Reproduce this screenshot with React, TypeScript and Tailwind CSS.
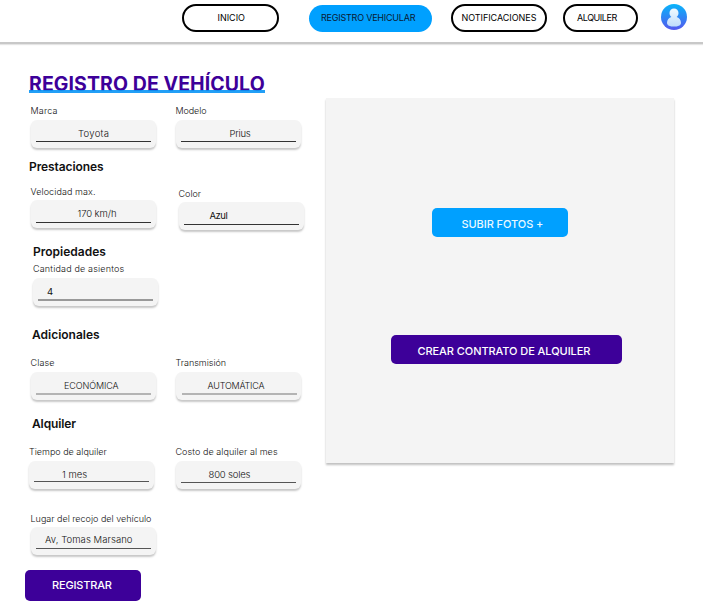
import type { ReactNode } from "react";

type FieldProps = {
  label: string;
  value: string;
  className?: string;
  labelClass?: string;
  boxClass?: string;
  valueClass?: string;
  lineClass?: string;
};

function Field({
  label,
  value,
  className = "",
  labelClass = "",
  boxClass = "mt-[3px] pt-2",
  valueClass = "",
  lineClass = "mt-px h-px bg-[#333]",
}: FieldProps) {
  return (
    <div className={`w-[125px] shrink-0 whitespace-nowrap ${className}`}>
      <div className={`text-[9px] leading-3 font-light text-[#111] ${labelClass}`}>{label}</div>
      <div className={`h-7 rounded-[6px] bg-[#f4f4f4] shadow-[0_2px_2px_rgba(0,0,0,0.22)] ${boxClass}`}>
        <div className={`text-[9.5px] leading-3 font-light text-[#111] ${valueClass}`}>{value}</div>
        <div className={`ml-[5px] w-[115px] ${lineClass}`} />
      </div>
    </div>
  );
}

function Heading({ children, className }: { children: ReactNode; className: string }) {
  return <h2 className={`text-[12px] leading-4 font-semibold text-[#111] ${className}`}>{children}</h2>;
}

function Avatar() {
  return (
    <svg viewBox="0 0 26 26" className="mt-[4px] ml-[23px] size-[26px]">
      <defs>
        <linearGradient id="disc" x1="0" y1="0" x2="0" y2="1">
          <stop offset="0" stopColor="#08b5fb" />
          <stop offset="1" stopColor="#5558ee" />
        </linearGradient>
        <linearGradient id="person" x1="0" y1="0" x2="0" y2="1">
          <stop offset="0" stopColor="#f0faff" />
          <stop offset="1" stopColor="#bfdcfb" />
        </linearGradient>
      </defs>
      <circle cx="13" cy="13" r="13" fill="url(#disc)" />
      <path
        d="M13 4.500c2.600 0 4.500 2 4.500 4.500 0 1.700-.7 3.100-1.900 4.100 2.400.7 4.400 2.800 4.400 5.600 0 2.600-3 3.900-7 3.900s-7-1.300-7-3.900c0-2.800 2-4.900 4.400-5.600C9.200 12.100 8.500 10.700 8.500 9c0-2.500 1.900-4.500 4.500-4.500z"
        fill="url(#person)"
      />
    </svg>
  );
}

export default function App() {
  return (
    <div className="h-[607px] w-[703px] overflow-hidden bg-white font-['Inter',sans-serif] text-black">
      <header className="flex h-[44px] items-start border-b-2 border-[#c8c8c8] pl-[182px] text-[9px] leading-3 whitespace-nowrap shadow-[0_1px_1px_rgba(0,0,0,0.1)]">
        <div className="mt-[4px] h-7 w-[97px] rounded-full border-2 border-black pt-[6px] pl-[33.500px]">INICIO</div>
        <div className="mt-[5px] ml-[30px] h-[27px] w-[123px] rounded-full bg-[#00a0ff] pt-[7px] pl-[12px] tracking-[-0.22px] text-[#0a1a33]">
          REGISTRO VEHICULAR
        </div>
        <div className="mt-[4px] ml-[19px] h-7 w-[96px] rounded-full border-2 border-black pt-[6px] pl-[8.500px] tracking-[-0.04px]">
          NOTIFICACIONES
        </div>
        <div className="mt-[4px] ml-[16px] h-7 w-[75px] rounded-full border-2 border-black pt-[6px] pl-[12px] tracking-[-0.45px]">
          ALQUILER
        </div>
        <Avatar />
      </header>

      <main className="flex">
        <section className="w-[326px] shrink-0 pt-[27px] pl-[25px]">
          <div className="relative ml-[4px] h-6 w-[236px] pt-px">
            <h1 className="text-[19.500px] leading-6 font-bold tracking-[0.080px] whitespace-nowrap text-[#3d0099]">
              REGISTRO DE VEHÍCULO
            </h1>
            <div className="absolute top-[19px] left-0 h-[2.500px] w-[236px] bg-[#0a95f5]/90" />
          </div>

          <div className="mt-[10px] flex">
            <Field label="Marca" value="Toyota" className="ml-[5.500px]" labelClass="tracking-[0.2px]" valueClass="pl-[47.500px] tracking-[0.28px]" />
            <Field label="Modelo" value="Prius" className="ml-5" labelClass="tracking-[-0.1px]" valueClass="pl-[54px] tracking-[-0.25px]" />
          </div>

          <Heading className="mt-[11px] ml-[4px] tracking-[-0.1px]">Prestaciones</Heading>
          <div className="mt-[11px] flex">
            <Field
              label="Velocidad max."
              value="170 km/h"
              className="ml-[5.500px]"
              labelClass="tracking-[0.09px]"
              boxClass="mt-[2px] pt-2"
              valueClass="pl-[47px] tracking-[-0.09px]"
              lineClass="mt-[2px] h-px bg-[#333]"
            />
            <Field
              label="Color"
              value="Azul"
              className="mt-[2px] ml-[23px]"
              boxClass="mt-[2px] pt-2"
              valueClass="pl-[31px] font-normal tracking-[-0.5px]"
              lineClass="mt-[2px] h-px bg-[#333]"
            />
          </div>

          <Heading className="mt-[14px] ml-[8px]">Propiedades</Heading>
          <Field
            label="Cantidad de asientos"
            value="4"
            className="mt-[3px] ml-[8px]"
            labelClass="tracking-[0.17px]"
            valueClass="pl-[14px] font-normal"
            lineClass="mt-px h-[2px] bg-[#999]"
          />

          <Heading className="mt-[21px] ml-[7px]">Adicionales</Heading>
          <div className="mt-[14px] flex">
            <Field
              label="Clase"
              value="ECONÓMICA"
              className="ml-[5.500px]"
              labelClass="tracking-[0.13px]"
              valueClass="pl-[33.500px] text-[9px] tracking-[-0.1px]"
              lineClass="h-[2px] bg-[#b4b4b4] mt-px"
            />
            <Field
              label="Transmisión"
              value="AUTOMÁTICA"
              className="-mb-px ml-5"
              boxClass="mt-[3.400px] pt-2"
              valueClass="pl-[32px] text-[9px] tracking-[-0.19px]"
              lineClass="mt-px ml-[6px] h-[2px] bg-[#b4b4b4]"
            />
          </div>

          <Heading className="mt-[16px] ml-[7px] tracking-[-0.12px]">Alquiler</Heading>
          <div className="mt-[14px] flex">
            <Field
              label="Tiempo de alquiler"
              value="1 mes"
              className="ml-[4px]"
              valueClass="pl-[33px]"
              lineClass="h-px bg-[#555]"
            />
            <Field
              label="Costo de alquiler al mes"
              value="800 soles"
              className="ml-[21.500px]"
              labelClass="tracking-[0.07px]"
              valueClass="pl-[33px] tracking-[-0.17px]"
              lineClass="mt-px h-px bg-[#555]"
            />
          </div>

          <Field
            label="Lugar del recojo del vehículo"
            value="Av, Tomas Marsano"
            className="mt-[24px] ml-[5.500px]"
            boxClass="mt-[2px] pt-[7px]"
            valueClass="pl-[14.500px] tracking-[0.06px]"
            lineClass="mt-[2px] h-px bg-[#555]"
          />

          <button className="mt-[15px] block h-[31px] w-[116px] rounded-[5px] bg-[#3d0099] pl-[27px] text-left text-[11px] font-medium tracking-[-0.17px] text-white">
            REGISTRAR
          </button>
        </section>

        <aside className="mt-[54px] flex h-[365px] w-[348px] flex-col items-start bg-[#f4f4f4] pt-[110px] text-[11px] font-medium tracking-[-0.07px] whitespace-nowrap shadow-[0_2px_2px_rgba(0,0,0,0.25)]">
          <button className="ml-[106px] h-[29px] w-[136px] rounded-[5px] bg-[#00a0ff] pt-[3px] pl-[29.500px] text-left text-[#e8f8ff]">
            SUBIR FOTOS +
          </button>
          <button className="mt-[98px] ml-[65px] h-[29px] w-[231px] rounded-[5px] bg-[#3d0099] pt-[3px] pl-[26.500px] text-left text-white">
            CREAR CONTRATO DE ALQUILER
          </button>
        </aside>
      </main>
    </div>
  );
}
